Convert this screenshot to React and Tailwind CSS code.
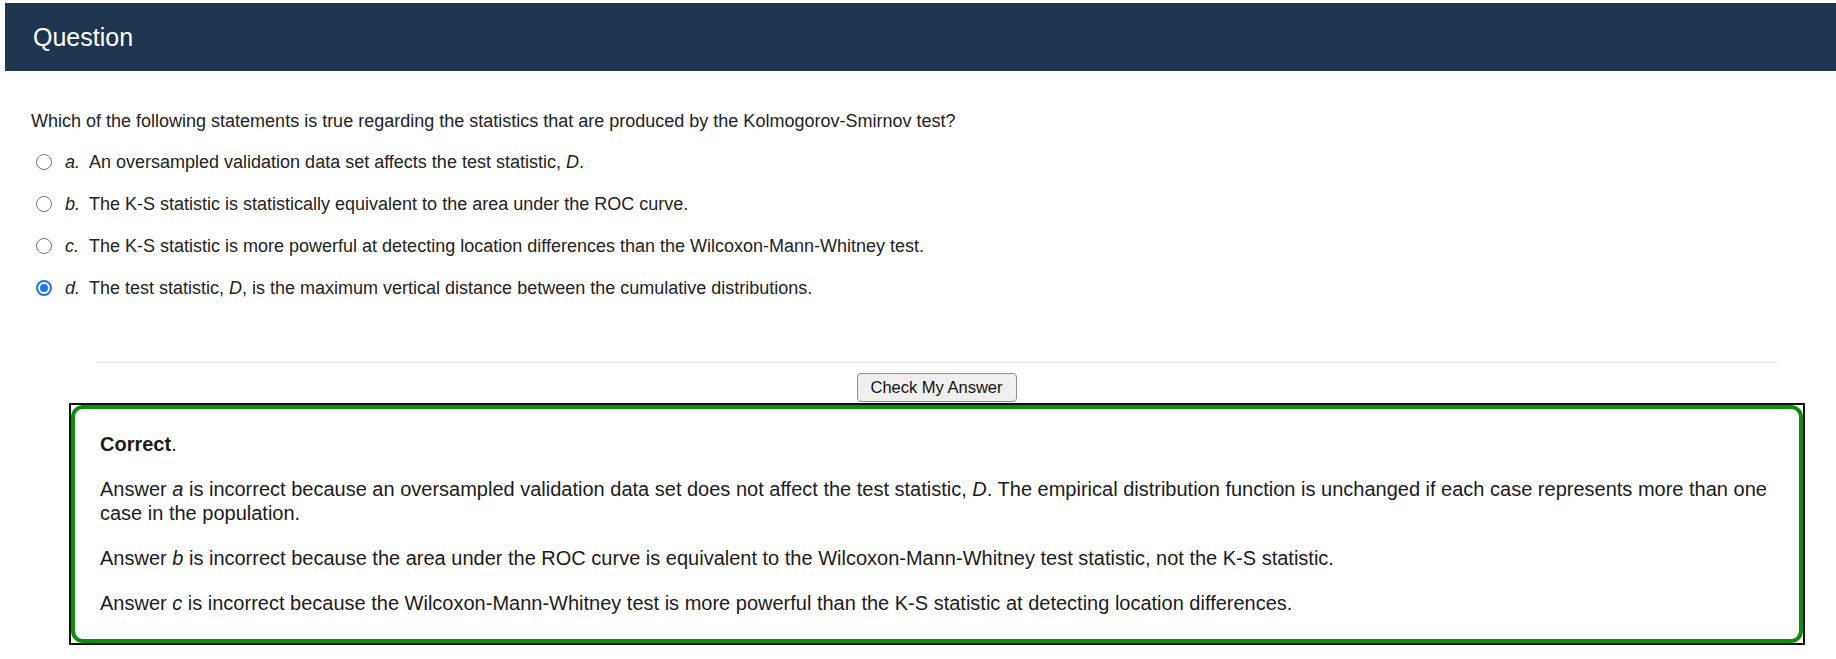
export default function App() {
  const opts = [
    { l: "a.", t: <>An oversampled validation data set affects the test statistic, <i>D</i>.</> },
    { l: "b.", t: <>The K-S statistic is statistically equivalent to the area under the ROC curve.</> },
    { l: "c.", t: <>The K-S statistic is more powerful at detecting location differences than the Wilcoxon-Mann-Whitney test.</> },
    { l: "d.", t: <>The test statistic, <i>D</i>, is the maximum vertical distance between the cumulative distributions.</>, checked: true },
  ];
  return (
    <div className="w-[1836px] h-[659px] bg-white overflow-hidden pt-[3px] pl-[5px] text-[#222]" style={{ fontFamily: '"Liberation Sans", Arial, sans-serif' }}>
      <div className="h-[68px] bg-[#203550] flex items-center pl-[28px]">
        <span className="text-white text-[25px] leading-none">Question</span>
      </div>
      <p className="ml-[26px] mt-[38px] text-[18px] leading-[24px]">
        Which of the following statements is true regarding the statistics that are produced by the Kolmogorov-Smirnov test?
      </p>
      <div className="mt-[8px]">
        {opts.map((o) => (
          <div key={o.l} className="flex items-center h-[42px] pl-[31px] text-[18px]">
            {o.checked ? (
              <span className="w-[16px] h-[16px] rounded-full border-2 border-[#1a73e8] flex items-center justify-center">
                <span className="w-[8px] h-[8px] rounded-full bg-[#1a73e8]"></span>
              </span>
            ) : (
              <span className="w-[16px] h-[16px] rounded-full border border-[#767676] bg-white"></span>
            )}
            <i className="ml-[13px] w-[24px] inline-block">{o.l}</i>
            <span>{o.t}</span>
          </div>
        ))}
      </div>
      <div className="ml-[91px] mr-[59px] mt-[53px] border-t border-[#e3e3e3] pt-[10px] flex justify-center">
        <button className="w-[160px] h-[29px] bg-[#efefef] border border-[#8f8f8f] rounded-[4px] text-[16.5px] leading-none text-[#111]">
          Check My Answer
        </button>
      </div>
      <div className="ml-[64px] mt-[1px] w-[1736px] border-2 border-[#111]">
        <div className="border-4 border-[#0e8c0e] rounded-[12px] pl-[25px] pr-[25px] pt-[23px] pb-[24px] text-[20px] leading-[24px] text-[#1b1b1b]">
          <p><b>Correct</b>.</p>
          <p className="mt-[21px]">Answer <i>a</i> is incorrect because an oversampled validation data set does not affect the test statistic, <i>D</i>. The empirical distribution function is unchanged if each case represents more than one case in the population.</p>
          <p className="mt-[21px]">Answer <i>b</i> is incorrect because the area under the ROC curve is equivalent to the Wilcoxon-Mann-Whitney test statistic, not the K-S statistic.</p>
          <p className="mt-[21px]">Answer <i>c</i> is incorrect because the Wilcoxon-Mann-Whitney test is more powerful than the K-S statistic at detecting location differences.</p>
        </div>
      </div>
    </div>
  );
}
